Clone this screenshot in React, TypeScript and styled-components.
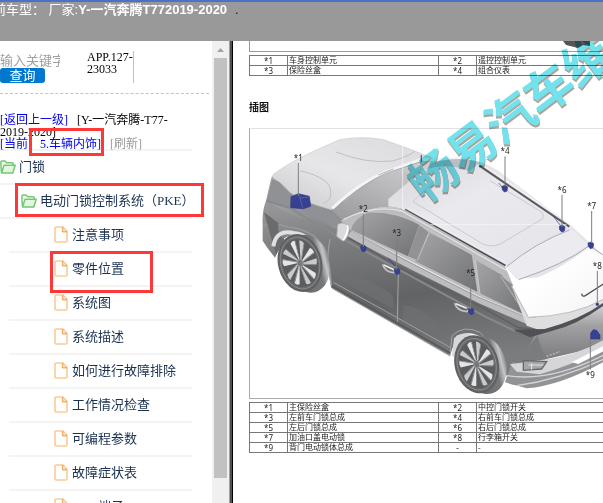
import React from "react";
import styled, { createGlobalStyle } from "styled-components";

const GlobalStyle = createGlobalStyle`
  * { box-sizing: border-box; }
  body { margin: 0; background: #fff; overflow: hidden; }
`;

const serif = '"Liberation Serif", "Noto Sans CJK SC", serif';
const sans = '"Liberation Sans", "Noto Sans CJK SC", sans-serif';

const Page = styled.div`
  display: flex;
  flex-direction: column;
  height: 100vh;
  overflow: hidden;
`;

const Header = styled.header`
  flex: none;
  height: 41px;
  border-top: 2px solid #4a72c8;
  background: #999;
  color: #fff;
  font: 13px/16px ${sans};
  white-space: pre;
  text-indent: -20px;
  overflow: hidden;
`;

const Dot = styled.span`
  margin-left: 8px;
  color: #222;
`;

const Body = styled.div`
  flex: 1;
  min-height: 0;
  display: grid;
  grid-template-columns: 212px 17px 4px 1fr;
`;

const Sidebar = styled.nav`
  position: relative;
  overflow: hidden;
  font-family: ${serif};
`;

const SearchForm = styled.form`
  display: flex;
  align-items: flex-start;
  gap: 27px;
  margin: 0 3px 0 0;
  padding: 10px 0;
  border-bottom: 1px dashed #c4c4c4;
`;

const SearchFields = styled.div`
  display: flex;
  flex-direction: column;
  width: 60px;
  padding-top: 3px;
`;

const SearchInput = styled.input`
  width: 100%;
  height: 14px;
  padding: 0;
  border: 0;
  outline: 0;
  font: 13px/14px ${sans};
  &::placeholder { color: #a0a0a0; opacity: 1; }
`;

const SearchButton = styled.button`
  width: 45px;
  height: 15px;
  padding: 0;
  border: 0;
  border-radius: 3px;
  background: #0078d0;
  color: #fff;
  font: 13px/14px ${sans};
`;

const Version = styled.div`
  width: 47px;
  height: 32px;
  border-right: 1px solid #c0c0c0;
  font-size: 12px;
  line-height: 12px;
`;

const Crumbs = styled.div`
  width: 192px;
  padding-top: 20px;
  border-bottom: 2px solid #f4f4f4;
  font-size: 12px;
  line-height: 12px;
`;

const CrumbLine = styled.div`
  height: 12px;
  white-space: pre;
  &:last-child { height: 11px; }
`;

const CrumbLink = styled.a<{ $muted?: boolean }>`
  color: ${(p) => (p.$muted ? "#999" : "#0000ee")};
  text-decoration: none;
`;

const Tree = styled.ul`
  margin: 0;
  padding: 0;
  list-style: none;
`;

const TreeRow = styled.li<{ $level: number }>`
  width: ${(p) => (p.$level === 2 ? 183 : 192)}px;
  height: 34px;
  margin-left: ${(p) => (p.$level === 2 ? 9 : 0)}px;
  padding-left: ${(p) => [0, 21, 45][p.$level]}px;
  border-bottom: 2px solid #f4f4f4;
`;

const TreeLink = styled.a<{ $folder?: boolean }>`
  display: flex;
  align-items: center;
  gap: ${(p) => (p.$folder ? 3 : 4)}px;
  height: 31px;
  color: #1a3152;
  font-size: 13px;
  line-height: 16px;
  text-decoration: none;
  white-space: nowrap;
  svg { flex: none; }
`;

const Mark = styled.div<{ $x: number; $y: number; $w: number; $h: number }>`
  position: absolute;
  left: ${(p) => p.$x}px;
  top: ${(p) => p.$y}px;
  width: ${(p) => p.$w}px;
  height: ${(p) => p.$h}px;
  border: 3px solid #fc3838;
  pointer-events: none;
`;

const ScrollTrack = styled.div`
  display: grid;
  grid-template-rows: 17px 17fr 1fr;
  justify-items: center;
  background: #f0f0f0;
`;

const ScrollThumb = styled.div`
  width: 13px;
  background: #c1c1c1;
`;

const Divider = styled.div`
  border-left: 1px solid #a0a0a0;
  border-right: 1px solid #000;
  background: #505050;
`;

const Doc = styled.main`
  position: relative;
  padding-left: 16px;
  overflow: hidden;
  font: 8px/8px ${sans};
  color: #222;
`;

const PreviousFigure = styled.div`
  display: flex;
  justify-content: flex-end;
  height: 11px;
  margin-bottom: 3px;
  padding-right: 13px;
  border-left: 1px solid #999;
  border-bottom: 1px solid #999;
  overflow: hidden;
`;

const PartTable = styled.table`
  width: 100%;
  table-layout: fixed;
  border-collapse: collapse;
`;

const NumCol = styled.col` width: 38px; `;
const NameCol = styled.col` width: 151px; `;

const Cell = styled.td<{ $num?: boolean }>`
  height: 10px;
  padding: 0 1px;
  border: 1px solid #777;
  line-height: 8px;
  white-space: nowrap;
  font-family: ${(p) => (p.$num ? '"Noto Sans", sans-serif' : sans)};
  text-align: ${(p) => (p.$num ? "center" : "left")};
  &:last-child { border-right: 0; }
`;

const Heading = styled.h2`
  margin: 26px 0 14px;
  color: #111;
  font: bold 10px/12px ${sans};
`;

const Figure = styled.figure`
  height: 271px;
  margin: 0 0 3px;
  border: 1px solid #aaa;
  border-top-color: #e2e2e6;
  border-right: 0;
  overflow: hidden;
  svg { display: block; }
`;

const Watermark = styled.svg`
  position: absolute;
  left: 0;
  top: 0;
  pointer-events: none;
  mix-blend-mode: multiply;
`;

const FileIcon = () => (
  <svg width="14" height="17" viewBox="0 0 14 17" fill="none" stroke="#f9cb98" strokeWidth="1.6" strokeLinejoin="round">
    <path d="M2 1h7l4 4.4V15q0 1-1 1H2q-1 0-1-1V2q0-1 1-1z" />
    <path d="M8.6 1v4.6H13" stroke="#f5b063" />
  </svg>
);

const FolderIcon = () => (
  <svg width="16" height="14" viewBox="0 0 16 14" fill="none" stroke="#73c973" strokeWidth="1.5" strokeLinejoin="round">
    <path d="M1.4 12.4L.8 2.2Q.8 1 2 1h3l1.5 1.8h5.7q1 0 1 1v1.4" />
    <path d="M1.6 13L4 5.2h11.2L12.8 13z" fill="#e4f6df" />
  </svg>
);

const Wheel = ({ x, y }: { x: number; y: number }) => (
  <g transform={`translate(${x} ${y}) rotate(-14)`}>
    <ellipse cx="22" cy="8" rx="65" ry="88" fill="url(#tire)" />
    <ellipse rx="66" ry="88" fill="#606163" />
    <ellipse rx="58" ry="79" fill="#6b6c6e" stroke="#98999b" strokeWidth="2" />
    <ellipse rx="53" ry="73" fill="#5b5c5e" />
    {[8, 80, 152, 224, 296].map((a) => (
      <g key={a} transform={`scale(.74 1) rotate(${a})`}>
        <path d="M-4-12L-27-60Q-19-70-8-68L0-14z" fill="#e6e6e8" />
        <path d="M4-12L10-69Q20-68 27-60L9-12z" fill="#c9cacc" />
        <path d="M-1-18L-8-66M9-14L27-58" stroke="#8b8c8e" strokeWidth="3" />
      </g>
    ))}
    <ellipse rx="9" ry="12" fill="#77787a" stroke="#b5b5b7" strokeWidth="2" />
  </g>
);

const callouts: [string, number, number, number, number][] = [
  ["*1", 145, 96, 102, 200],
  ["*2", 340, 250, 256, 354],
  ["*3", 440, 322, 328, 422],
  ["*4", 765, 74, 82, 172],
  ["*5", 662, 442, 448, 540],
  ["*6", 936, 191, 198, 294],
  ["*7", 1025, 240, 246, 342],
  ["*8", 1042, 420, 426, 520],
  ["*9", 1021, 747, 722, 630],
];

const clips = [[340, 358], [441, 426], [764, 178], [663, 546], [936, 298], [1022, 348]];

const Car = () => (
  <svg width="354" height="270" viewBox="0 0 1062 810" role="img" aria-label="车辆零件位置">
    <defs>
      <linearGradient id="side" x1="0" y1="0" x2="0.25" y2="1">
        <stop offset="0" stopColor="#a6a6a8" />
        <stop offset=".36" stopColor="#7b7c7e" />
        <stop offset=".65" stopColor="#626365" />
        <stop offset="1" stopColor="#7b7c7e" />
      </linearGradient>
      <linearGradient id="hood" x1="0" y1="1" x2="1" y2="0">
        <stop offset="0" stopColor="#c9c9cc" />
        <stop offset=".45" stopColor="#e7e7ea" />
        <stop offset="1" stopColor="#dadadd" />
      </linearGradient>
      <linearGradient id="fender" x1="0" y1="0" x2="0.5" y2="1">
        <stop offset="0" stopColor="#b4b4b7" />
        <stop offset="1" stopColor="#88898b" />
      </linearGradient>
      <linearGradient id="glass" x1="0" y1="0" x2="1" y2="1">
        <stop offset="0" stopColor="#a5a5a8" />
        <stop offset="1" stopColor="#717274" />
      </linearGradient>
      <linearGradient id="screen" x1="0" y1="1" x2="1" y2="0">
        <stop offset="0" stopColor="#98989b" />
        <stop offset="1" stopColor="#dededf" />
      </linearGradient>
      <linearGradient id="roof" x1="0" y1="0" x2="1" y2="1">
        <stop offset="0" stopColor="#d5d5d9" />
        <stop offset=".35" stopColor="#e9e9ee" />
        <stop offset="1" stopColor="#e2e2e8" />
      </linearGradient>
      <linearGradient id="rear" x1="0" y1="0" x2="0" y2="1">
        <stop offset="0" stopColor="#d7d7da" />
        <stop offset=".35" stopColor="#a0a0a3" />
        <stop offset="1" stopColor="#707173" />
      </linearGradient>
      <linearGradient id="tire" x1="0" y1="0" x2="1" y2="0">
        <stop offset="0" stopColor="#646567" />
        <stop offset=".75" stopColor="#77787a" />
        <stop offset=".9" stopColor="#c6c6c8" />
        <stop offset="1" stopColor="#88898b" />
      </linearGradient>
      <linearGradient id="tailgate" x1="0" y1="0" x2="1" y2="1">
        <stop offset="0" stopColor="#f1f1f2" />
        <stop offset=".35" stopColor="#fff" />
        <stop offset="1" stopColor="#f4f4f6" />
      </linearGradient>
    </defs>

    {/* body side */}
    <path d="M64 146L48 215Q36 245 38 285L38 335Q52 358 75 386L100 330Q150 295 205 350Q235 390 244 476L600 680L620 620Q690 590 745 680L780 765L850 775L900 600L780 500L300 270Z" fill="url(#side)" />
    <path d="M66 140L52 205Q90 260 200 278L256 300L300 290L245 242L100 170Z" fill="url(#fender)" />
    <path d="M66 150Q140 180 205 206L272 275Q265 300 256 300L170 250L50 216Z" fill="#909194" />
    <path d="M50 216L118 236L256 318L700 560L795 606" fill="none" stroke="#88898b" strokeWidth="6" />
    <path d="M40 290Q75 280 115 294Q185 300 222 354Q239 390 244 470" fill="none" stroke="#97989b" strokeWidth="4" />
    <path d="M42 250L78 378L104 330Q80 320 85 282Z" fill="#6a6b6d" />
    <path d="M70 352Q78 300 130 312Q175 316 205 360" fill="none" stroke="#e0e0e2" strokeWidth="12" />

    {/* hood and windscreen */}
    <path d="M68 138Q120 95 270 32Q335 20 400 32Q470 55 545 86L505 98Q385 130 245 242Q155 218 120 190Z" fill="url(#hood)" stroke="#c9c9cc" strokeWidth="2" />
    <path d="M150 125Q245 148 242 190Q245 216 220 222M258 69Q350 105 428 96Q475 82 495 67" fill="none" stroke="#c0c0c4" strokeWidth="3" />
    <path d="M245 242Q385 120 505 95L660 90Q600 98 570 140L470 220L455 240Q385 228 335 250L275 274Z" fill="url(#screen)" />
    <path d="M247 238Q330 160 410 128L510 92L650 88" fill="none" stroke="#f4f4f6" strokeWidth="9" />
    <path d="M247 247Q340 160 410 132L520 96" fill="none" stroke="#9d9da0" strokeWidth="2" />
    <path d="M280 220L320 184M337 178L372 154M385 138L430 120" stroke="#b4b4b7" strokeWidth="3" />
    <path d="M514 78V98" stroke="#66676a" strokeWidth="4" />

    {/* roof */}
    <path d="M415 210L510 130Q570 80 660 92Q700 96 745 125L965 292L1062 380L1062 430L800 450L766 412L465 240L415 232Z" fill="url(#roof)" />
    <path d="M545 103Q620 78 690 100L660 126Q590 100 525 122Z" fill="#a9aaad" opacity=".65" />
    <path d="M489 218L560 150M489 218L700 346Q735 360 768 335L877 270Q885 255 870 246L720 155" fill="none" stroke="#cacace" strokeWidth="3" />
    <path d="M688 110L958 293" stroke="#58595b" strokeWidth="6" />
    <path d="M700 110L975 295" stroke="#f6f6f8" strokeWidth="3" />
    <path d="M465 242L766 410" stroke="#4c4d50" strokeWidth="6" />
    <path d="M475 239L772 404" stroke="#efeff1" strokeWidth="3" />
    <path d="M770 413Q855 342 965 302L1015 347Q930 410 806 452Z" fill="#ececf0" />
    <path d="M770 413Q855 342 958 303M806 452Q945 405 1018 350L1062 380" fill="none" stroke="#acacb0" strokeWidth="3" />
    <path d="M458 40V287H950" fill="none" stroke="#f9f9fb" strokeWidth="2" />

    {/* side glass and pillars */}
    <path d="M272 275Q370 220 465 242L765 412L790 470L835 565L665 497L300 303Z" fill="#bcbcbf" />
    <path d="M303 302Q305 272 354 250Q430 244 508 286L474 382Z" fill="url(#glass)" />
    <path d="M508 288L536 310L500 392L474 382Z" fill="#929296" />
    <path d="M538 311Q600 342 665 376L682 488L496 397Z" fill="url(#glass)" />
    <path d="M678 394L755 438L826 558L690 493Z" fill="url(#glass)" />
    <path d="M752 440L788 468L835 562L820 550Z" fill="#8c8c90" />
    <path d="M280 272Q370 225 455 246L770 424" fill="none" stroke="#e2e2e4" strokeWidth="4" />
    <path d="M300 302Q310 270 352 249Q445 243 537 303L668 378M536 315L502 395M676 393L690 493M752 442L822 550" fill="none" stroke="#cfcfd2" strokeWidth="2" />
    <path d="M302 307L500 408L682 501L830 565" fill="none" stroke="#e6e6e9" strokeWidth="5" />
    <path d="M297 316L500 421L690 515L850 585" fill="none" stroke="#bdbdc0" strokeWidth="17" />
    <path d="M292 325L490 438L690 532L805 596L875 604" fill="none" stroke="#606164" strokeWidth="5" />
    <path d="M300 305L498 410L680 502L830 565" fill="none" stroke="#85868a" strokeWidth="2" />

    {/* doors */}
    <path d="M240 330Q225 400 244 470M445 435L442 578M600 680L606 620Q640 586 690 610Q730 650 754 704" fill="none" stroke="#a4a5a7" strokeWidth="3" />
    <path d="M250 460L440 565L600 655M246 478L600 681" fill="none" stroke="#a0a1a3" strokeWidth="3" />
    <path d="M245 470L600 672" stroke="#58595b" strokeWidth="5" />
    <path d="M270 424Q340 438 430 500L430 540L270 454ZM460 530Q530 530 590 620L580 634L460 574Z" fill="#6f7072" opacity=".7" />
    <path d="M398 406Q405 430 432 431L440 420M614 522Q620 545 650 548L660 538" fill="none" stroke="#c4c4c7" strokeWidth="5" />
    <path d="M402 408L433 423M618 524L650 538" stroke="#ececee" strokeWidth="5" />
    <path d="M263 287Q276 276 295 290L298 305Q293 330 278 336L260 322Z" fill="#dadadd" stroke="#aaaaae" strokeWidth="2" />
    <path d="M292 288Q298 303 280 334" fill="none" stroke="#fff" strokeWidth="5" />

    {/* tailgate and bumper */}
    <path d="M785 471Q910 440 1018 353L1062 382V510Q980 560 835 565Z" fill="url(#tailgate)" />
    <path d="M785 471L835 565Q960 565 1062 508V535Q960 590 875 605L830 590Z" fill="#dededf" />
    <path d="M785 471L835 565Q970 562 1062 510" fill="none" stroke="#bdbdc1" strokeWidth="3" />
    <path d="M862 606Q990 572 1062 522V650L890 690L860 710L800 720Z" fill="url(#rear)" />
    <path d="M790 602L885 600Q990 573 1062 520L1060 530Q980 588 905 606L840 625Z" fill="#505154" />
    <path d="M862 620L885 688L805 708Q830 660 862 620Z" fill="#7b7c7e" />
    <path d="M786 700Q870 730 1062 638V698Q930 770 830 778L765 760Z" fill="#929396" />
    <path d="M880 692Q980 680 1062 632V660Q960 710 870 736L800 728L780 706Z" fill="#d6d6d9" />
    <path d="M965 700L1062 650V666L985 705Z" fill="#fff" />
    <path d="M770 740Q900 760 1062 678M800 770Q930 752 1062 690" fill="none" stroke="#d5d5d8" strokeWidth="4" />
    <path d="M820 695L890 698L875 720L820 724Z" fill="#a5a6a9" stroke="#67686b" strokeWidth="4" />
    <path d="M835 708H880M845 702V722" stroke="#e5e5e8" strokeWidth="3" />
    <path d="M890 682L930 668" stroke="#b2b2b6" strokeWidth="5" strokeDasharray="6 4" />
    <path d="M995 494Q996 505 1006 500L1062 464" fill="none" stroke="#505154" strokeWidth="4" />

    <Wheel x={150} y={402} />
    <path d="M606 680L612 628Q640 600 680 625L650 640Q625 650 622 690Z" fill="#d7d7da" />
    <Wheel x={680} y={706} />

    {/* highlighted parts */}
    <g fill="#36428f" stroke="#303a86" strokeWidth="2">
      <path d="M123 203L145 194L178 202L182 232L160 239L122 236Z" />
      <path d="M145 194L150 207L178 204M150 207L158 236" fill="none" stroke="#6570b2" />
      {clips.map(([x, y]) => (
        <path key={x} d={`M${x - 8} ${y - 6}l10-3l7 5l-2 12l-8 3l-6-7z`} />
      ))}
      <circle cx="1042" cy="526" r="4" />
      <path d="M1022 630V612L1030 602L1040 604L1050 618V630Z" />
      <path d="M746 162l12 14M910 262L932 290M414 386L434 410" fill="none" />
    </g>

    {callouts.map(([label, x, y, from, to]) => (
      <g key={label}>
        <path d={`M${x} ${from}V${to}`} stroke="#7d7d80" strokeWidth="3" />
        <text x={x} y={y} textAnchor="middle" fontFamily='"Noto Sans", sans-serif' fontSize="24" fill="#222">{label}</text>
      </g>
    ))}
  </svg>
);

const leaves = ["注意事项", "零件位置", "系统图", "系统描述", "如何进行故障排除", "工作情况检查", "可编程参数", "故障症状表", "ECU端子"];

const firstParts = [
  ["*1", "车身控制单元", "*2", "遥控控制单元"],
  ["*3", "保险丝盒", "*4", "组合仪表"],
];

const parts = [
  ["*1", "主保险丝盒", "*2", "中控门锁开关"],
  ["*3", "左前车门锁总成", "*4", "右前车门锁总成"],
  ["*5", "左后门锁总成", "*6", "右后门锁总成"],
  ["*7", "加油口盖电动锁", "*8", "行李箱开关"],
  ["*9", "背门电动锁体总成", "-", "-"],
];

const Parts = ({ rows }: { rows: string[][] }) => (
  <PartTable>
    <colgroup><NumCol /><NameCol /><NumCol /><col /></colgroup>
    <tbody>
      {rows.map((row) => (
        <tr key={row[0]}>
          {row.map((text, i) => <Cell key={i} $num={i % 2 === 0}>{text}</Cell>)}
        </tr>
      ))}
    </tbody>
  </PartTable>
);

export default function App() {
  return (
    <Page>
      <GlobalStyle />
      <Header>当前车型： 厂家:<b>Y-一汽奔腾T772019-2020</b><Dot>.</Dot></Header>
      <Body>
        <Sidebar>
          <SearchForm onSubmit={(e) => e.preventDefault()}>
            <SearchFields>
              <SearchInput aria-label="输入关键字" placeholder="输入关键字" />
              <SearchButton type="submit">查询</SearchButton>
            </SearchFields>
            <Version>APP.127-23033</Version>
          </SearchForm>
          <Crumbs>
            <CrumbLine><CrumbLink href="#up">[返回上一级]</CrumbLink>{"   "}[Y-一汽奔腾-T77-</CrumbLine>
            <CrumbLine>2019-2020]</CrumbLine>
            <CrumbLine>
              <CrumbLink href="#current">[当前：5.车辆内饰]</CrumbLink>{"   "}
              <CrumbLink href="#refresh" $muted>[刷新]</CrumbLink>
            </CrumbLine>
          </Crumbs>
          <Tree>
            <TreeRow $level={0}><TreeLink $folder href="#locks"><FolderIcon />门锁</TreeLink></TreeRow>
            <TreeRow $level={1}><TreeLink $folder href="#pke"><FolderIcon />电动门锁控制系统（PKE）</TreeLink></TreeRow>
            {leaves.map((name) => (
              <TreeRow key={name} $level={2}><TreeLink href={`#${name}`}><FileIcon />{name}</TreeLink></TreeRow>
            ))}
          </Tree>
          <Mark $x={29} $y={87} $w={75} $h={28} />
          <Mark $x={15} $y={142} $w={189} $h={34} />
          <Mark $x={50} $y={210} $w={103} $h={42} />
        </Sidebar>
        <ScrollTrack>
          <svg width="17" height="17" viewBox="0 0 17 17"><path d="M5 11L8.5 7L12 11z" fill="#a3a3a3" /></svg>
          <ScrollThumb />
        </ScrollTrack>
        <Divider />
        <Doc>
          <PreviousFigure>
            <svg width="27" height="8" viewBox="0 0 27 8"><path d="M0 0H27V5L20 4L15 7L3 4z" fill="#55565a" /></svg>
          </PreviousFigure>
          <Parts rows={firstParts} />
          <Heading>插图</Heading>
          <Figure><Car /></Figure>
          <Parts rows={parts} />
          <Watermark width="370" height="200" viewBox="0 0 370 200" aria-hidden="true">
            <g transform="translate(192 163) rotate(-37)" fontFamily='"Noto Sans CJK SC", sans-serif' fontWeight="bold" fontSize="48">
              <text x="-1" y="2" fill="#aaa49c">畅易汽车维</text>
              <text x="0" y="0" fill="#74e2ec">畅易汽车维</text>
            </g>
          </Watermark>
        </Doc>
      </Body>
    </Page>
  );
}
